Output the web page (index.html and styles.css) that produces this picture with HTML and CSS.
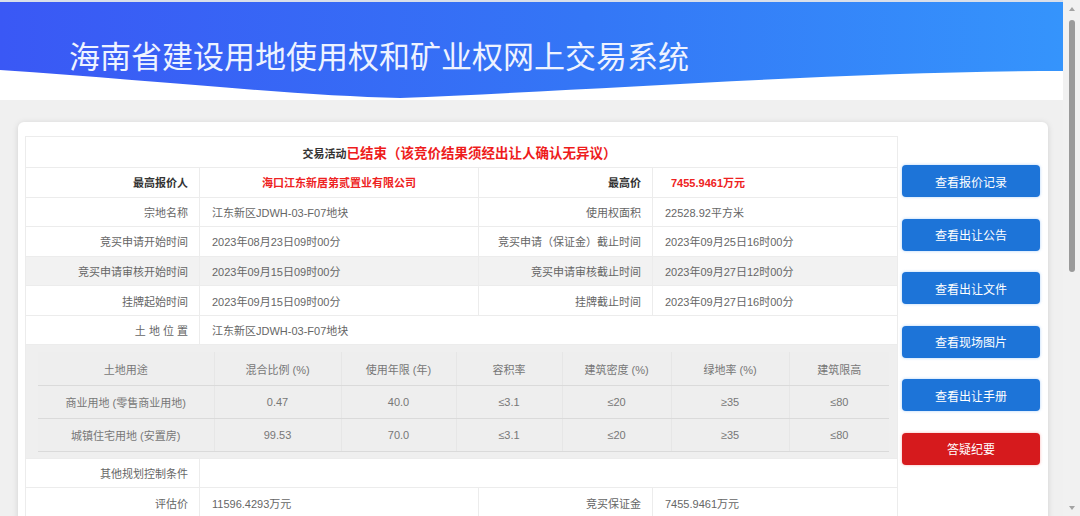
FILE: index.html
```html
<!DOCTYPE html>
<html>
<head>
    <meta charset="utf-8">
    <title>海南省建设用地使用权和矿业权网上交易系统</title>
    <link rel="stylesheet" href="styles.css">
</head>
<body>
    <div class="window">
        <div class="page">
            <div class="masthead">
                <div class="banner">
                    <h1 class="site-title">海南省建设用地使用权和矿业权网上交易系统</h1>
                </div>
            </div>
            <div class="content">
                <div class="deal-card">
                    <table class="deal-table">
                        <colgroup>
                            <col class="col-label">
                            <col class="col-value">
                            <col class="col-label">
                            <col class="col-value-wide">
                        </colgroup>
                        <tr class="row-status">
                            <td colspan="4" class="deal-status">
                                <span class="status-label">交易活动</span><span class="status-text">已结束（该竞价结果须经出让人确认无异议）</span>
                            </td>
                        </tr>
                        <tr class="row">
                            <td class="label strong">最高报价人</td>
                            <td class="value winner">海口江东新居第贰置业有限公司</td>
                            <td class="label strong">最高价</td>
                            <td class="value price">7455.9461万元</td>
                        </tr>
                        <tr class="row">
                            <td class="label">宗地名称</td>
                            <td class="value">江东新区JDWH-03-F07地块</td>
                            <td class="label">使用权面积</td>
                            <td class="value">22528.92平方米</td>
                        </tr>
                        <tr class="row">
                            <td class="label">竞买申请开始时间</td>
                            <td class="value">2023年08月23日09时00分</td>
                            <td class="label">竞买申请（保证金）截止时间</td>
                            <td class="value">2023年09月25日16时00分</td>
                        </tr>
                        <tr class="row row-hover">
                            <td class="label">竞买申请审核开始时间</td>
                            <td class="value">2023年09月15日09时00分</td>
                            <td class="label">竞买申请审核截止时间</td>
                            <td class="value">2023年09月27日12时00分</td>
                        </tr>
                        <tr class="row">
                            <td class="label">挂牌起始时间</td>
                            <td class="value">2023年09月15日09时00分</td>
                            <td class="label">挂牌截止时间</td>
                            <td class="value">2023年09月27日16时00分</td>
                        </tr>
                        <tr class="row-wide">
                            <td class="label">土 地 位 置</td>
                            <td class="value" colspan="3">江东新区JDWH-03-F07地块</td>
                        </tr>
                        <tr>
                            <td colspan="4" class="use-wrap">
                                <table class="use-table">
                                    <colgroup>
                                        <col class="u1"><col class="u2"><col class="u3"><col class="u4"><col class="u5"><col class="u6"><col class="u7">
                                    </colgroup>
                                    <tr class="use-head">
                                        <td>土地用途</td>
                                        <td>混合比例 (%)</td>
                                        <td>使用年限 (年)</td>
                                        <td>容积率</td>
                                        <td>建筑密度 (%)</td>
                                        <td>绿地率 (%)</td>
                                        <td>建筑限高</td>
                                    </tr>
                                    <tr>
                                        <td>商业用地 (零售商业用地)</td>
                                        <td>0.47</td>
                                        <td>40.0</td>
                                        <td>≤3.1</td>
                                        <td>≤20</td>
                                        <td>≥35</td>
                                        <td>≤80</td>
                                    </tr>
                                    <tr>
                                        <td>城镇住宅用地 (安置房)</td>
                                        <td>99.53</td>
                                        <td>70.0</td>
                                        <td>≤3.1</td>
                                        <td>≤20</td>
                                        <td>≥35</td>
                                        <td>≤80</td>
                                    </tr>
                                </table>
                            </td>
                        </tr>
                        <tr class="row-wide">
                            <td class="label">其他规划控制条件</td>
                            <td class="value" colspan="3"></td>
                        </tr>
                        <tr class="row-wide">
                            <td class="label">评估价</td>
                            <td class="value">11596.4293万元</td>
                            <td class="label">竞买保证金</td>
                            <td class="value">7455.9461万元</td>
                        </tr>
                    </table>
                    <div class="deal-actions">
                        <a href="javascript:void(0)" class="action-btn">查看报价记录</a>
                        <a href="javascript:void(0)" class="action-btn">查看出让公告</a>
                        <a href="javascript:void(0)" class="action-btn">查看出让文件</a>
                        <a href="javascript:void(0)" class="action-btn">查看现场图片</a>
                        <a href="javascript:void(0)" class="action-btn">查看出让手册</a>
                        <a href="javascript:void(0)" class="action-btn action-red">答疑纪要</a>
                    </div>
                </div>
            </div>
        </div>
        <div class="scrollbar">
            <span class="scroll-up"></span>
            <span class="scroll-thumb"></span>
            <span class="scroll-space"></span>
            <span class="scroll-down"></span>
        </div>
    </div>
</body>
</html>
```

FILE: styles.css
```css
html, body {
    margin: 0;
    height: 100%;
    overflow: hidden;
}
body {
    font-family: "Liberation Sans", "Noto Sans CJK SC", sans-serif;
    font-size: 11px;
    color: #666;
    background: #f0f0f0;
}
.window {
    display: flex;
    height: 516px;
}
.page {
    flex: 1;
    overflow: hidden;
    background: #f0f0f0;
}
.masthead {
    height: 100px;
    background: #fff;
    border-top: 2px solid #d9dfea;
    box-sizing: border-box;
}
.banner {
    height: 98px;
    background: linear-gradient(90deg, #3a58f5 0%, #3476f6 55%, #3594fc 100%);
    clip-path: path('M0 0 H1063 V69 C850 69 600 88 400 96 C300 94 150 78 0 68 Z');
}
.site-title {
    margin: 0;
    padding: 33px 0 0 69px;
    font-family: "Noto Sans CJK SC", sans-serif;
    font-size: 31px;
    line-height: 40px;
    font-weight: 400;
    color: #eef3ff;
}
.content {
    padding: 22px 15px 0 18px;
}
.deal-card {
    display: flex;
    align-items: flex-start;
    height: 430px;
    padding: 14px 8px 0 7px;
    background: #fff;
    border-radius: 6px;
    box-shadow: 0 1px 6px rgba(0,0,0,0.13);
}
.deal-table {
    width: 873px;
    flex: none;
    border-collapse: collapse;
    table-layout: fixed;
}
.col-label { width: 174px; }
.col-value { width: 279px; }
.col-value-wide { width: 245px; }
.deal-table td {
    border: 1px solid #ececec;
    padding: 0;
    white-space: nowrap;
}
.row-status { height: 31px; }
.row { height: 29.6px; }
.row-wide { height: 29.5px; }
.row-hover td {
    background: #f2f2f2;
}
.deal-status {
    text-align: center;
    padding-right: 4px !important;
}
.status-label {
    font-weight: bold;
    color: #333;
    font-size: 11px;
}
.status-text {
    font-family: "Noto Sans CJK SC", sans-serif;
    font-weight: bold;
    font-size: 13.5px;
    color: #ee1c1c;
}
.deal-table .label {
    text-align: right;
    padding-right: 11px;
}
.deal-table .value {
    padding-left: 12px;
}
.deal-table .strong {
    font-weight: bold;
    color: #333;
}
.deal-table .winner {
    text-align: center;
    padding-left: 0;
    font-weight: bold;
    color: #ee2222;
}
.deal-table .price {
    padding-left: 18px;
    font-weight: bold;
    color: #ee2222;
}
.deal-table .use-wrap {
    padding: 7px 10px 6px 12px;
    background: #efefef;
}
.use-table {
    width: 851px;
    border-collapse: collapse;
    table-layout: fixed;
}
.u1 { width: 176px; }
.u2 { width: 127px; }
.u3 { width: 115px; }
.u4 { width: 106px; }
.u5 { width: 109px; }
.u6 { width: 118px; }
.u7 { width: 100px; }
.use-table tr {
    height: 33px;
}
.use-table td {
    border: none;
    border-bottom: 1px solid #dadada;
    border-right: 1px solid #e6e6e6;
    text-align: center;
    color: #777;
    background: #eeeeee;
}
.use-table td:last-child {
    border-right: none;
}
.deal-actions {
    width: 138px;
    flex: none;
    margin-left: 4px;
    padding-top: 29px;
    display: flex;
    flex-direction: column;
    gap: 21.5px;
}
.action-btn {
    display: flex;
    align-items: center;
    justify-content: center;
    height: 32px;
    border-radius: 4px;
    background: #1d74d8;
    color: #fff;
    font-family: "Noto Sans CJK SC", sans-serif;
    font-size: 12px;
    text-decoration: none;
    box-shadow: 0 0 3px rgba(70,150,240,0.45);
}
.action-red {
    background: #d61a1d;
    box-shadow: 0 0 3px rgba(240,80,80,0.45);
}
.scrollbar {
    width: 17px;
    flex: none;
    background: #f1f1f1;
    display: flex;
    flex-direction: column;
    align-items: center;
}
.scroll-up {
    margin-top: 7px;
    border-left: 3.5px solid transparent;
    border-right: 3.5px solid transparent;
    border-bottom: 4px solid #a3a3a3;
}
.scroll-thumb {
    width: 6px;
    height: 252px;
    margin-top: 9px;
    border-radius: 3px;
    background: #9a9a9a;
}
.scroll-space {
    flex: 1;
}
.scroll-down {
    margin-bottom: 6px;
    border-left: 3.5px solid transparent;
    border-right: 3.5px solid transparent;
    border-top: 4px solid #a3a3a3;
}
```
